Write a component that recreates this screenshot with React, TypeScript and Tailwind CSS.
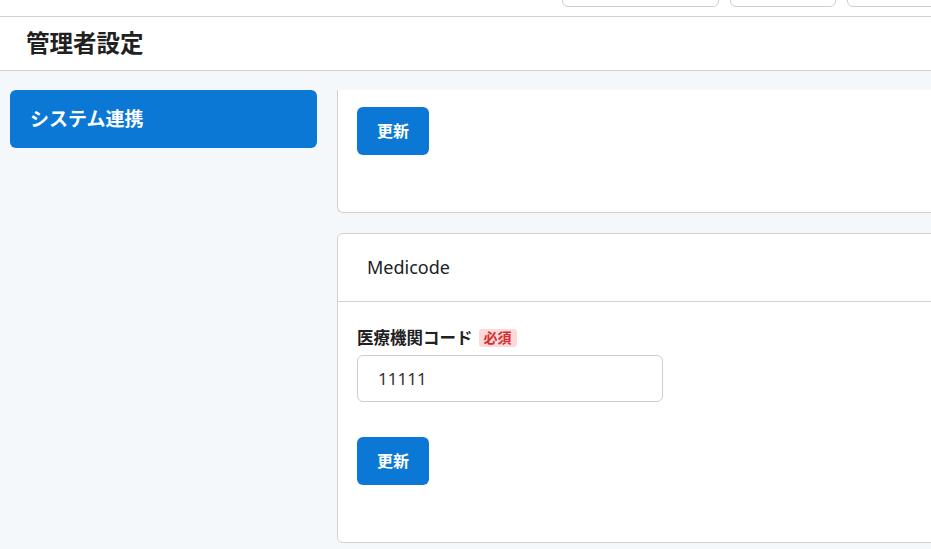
export default function App() {
  const font = { fontFamily: '"Noto Sans", "Noto Sans CJK JP", sans-serif' };
  return (
    <div className="h-[549px] w-[931px] overflow-hidden bg-[#f5f8fb] text-[#212121]" style={font}>
      {/* top toolbar, scrolled so only button bottoms show */}
      <div className="relative h-[17px] border-b border-[#d0d0d0] bg-white">
        <div className="absolute left-[562px] top-[-30px] flex gap-[11px]">
          <div className="h-[37px] w-[157px] rounded-md border border-[#cfcfcf] bg-white" />
          <div className="h-[37px] w-[106px] rounded-md border border-[#cfcfcf] bg-white" />
          <div className="h-[37px] w-[120px] rounded-md border border-[#cfcfcf] bg-white" />
        </div>
      </div>

      {/* page header */}
      <div className="flex h-[54px] items-center border-b border-[#d0d0d0] bg-white pl-[26px]">
        <h1 className="text-[23.5px] font-bold leading-none">管理者設定</h1>
      </div>

      <div className="flex pt-[19px]">
        {/* sidebar */}
        <div className="w-[337px] shrink-0 pl-[10px] pr-[20px]">
          <div className="flex h-[58px] items-center rounded-md bg-[#0a78d4] pl-[20px] text-[19px] font-bold text-white">
            システム連携
          </div>
        </div>

        {/* content, scrolled */}
        <div className="flex-1 overflow-hidden">
          <div className="mr-[-24px] flex flex-col gap-[20px]">
            <div className="h-[123px] rounded-b-md border border-t-0 border-[#d0d0d0] bg-white px-[19px] pt-[17px]">
              <button className="h-[48px] w-[72px] rounded-md bg-[#0a78d4] text-[16px] font-bold text-white">
                更新
              </button>
            </div>

            <div className="h-[310px] rounded-md border border-[#d0d0d0] bg-white">
              <div className="flex h-[68px] items-center border-b border-[#d0d0d0] pl-[29px] text-[18px]">
                Medicode
              </div>
              <div className="px-[19px] pt-[25px]">
                <div className="flex h-[22px] items-center gap-[6px]">
                  <span className="text-[16.5px] font-bold leading-none">医療機関コード</span>
                  <span className="rounded-[3px] bg-[#fdd9d9] px-[5px] py-[2px] text-[14px] font-bold leading-none text-[#d32f2f]">
                    必須
                  </span>
                </div>
                <input
                  className="mt-[6px] h-[47px] w-[306px] rounded-md border border-[#cccccc] px-[20px] text-[17px] text-[#333] outline-none"
                  defaultValue="11111"
                />
                <div className="mt-[35px]">
                  <button className="h-[48px] w-[72px] rounded-md bg-[#0a78d4] text-[16px] font-bold text-white">
                    更新
                  </button>
                </div>
              </div>
            </div>
          </div>
        </div>
      </div>
    </div>
  );
}
